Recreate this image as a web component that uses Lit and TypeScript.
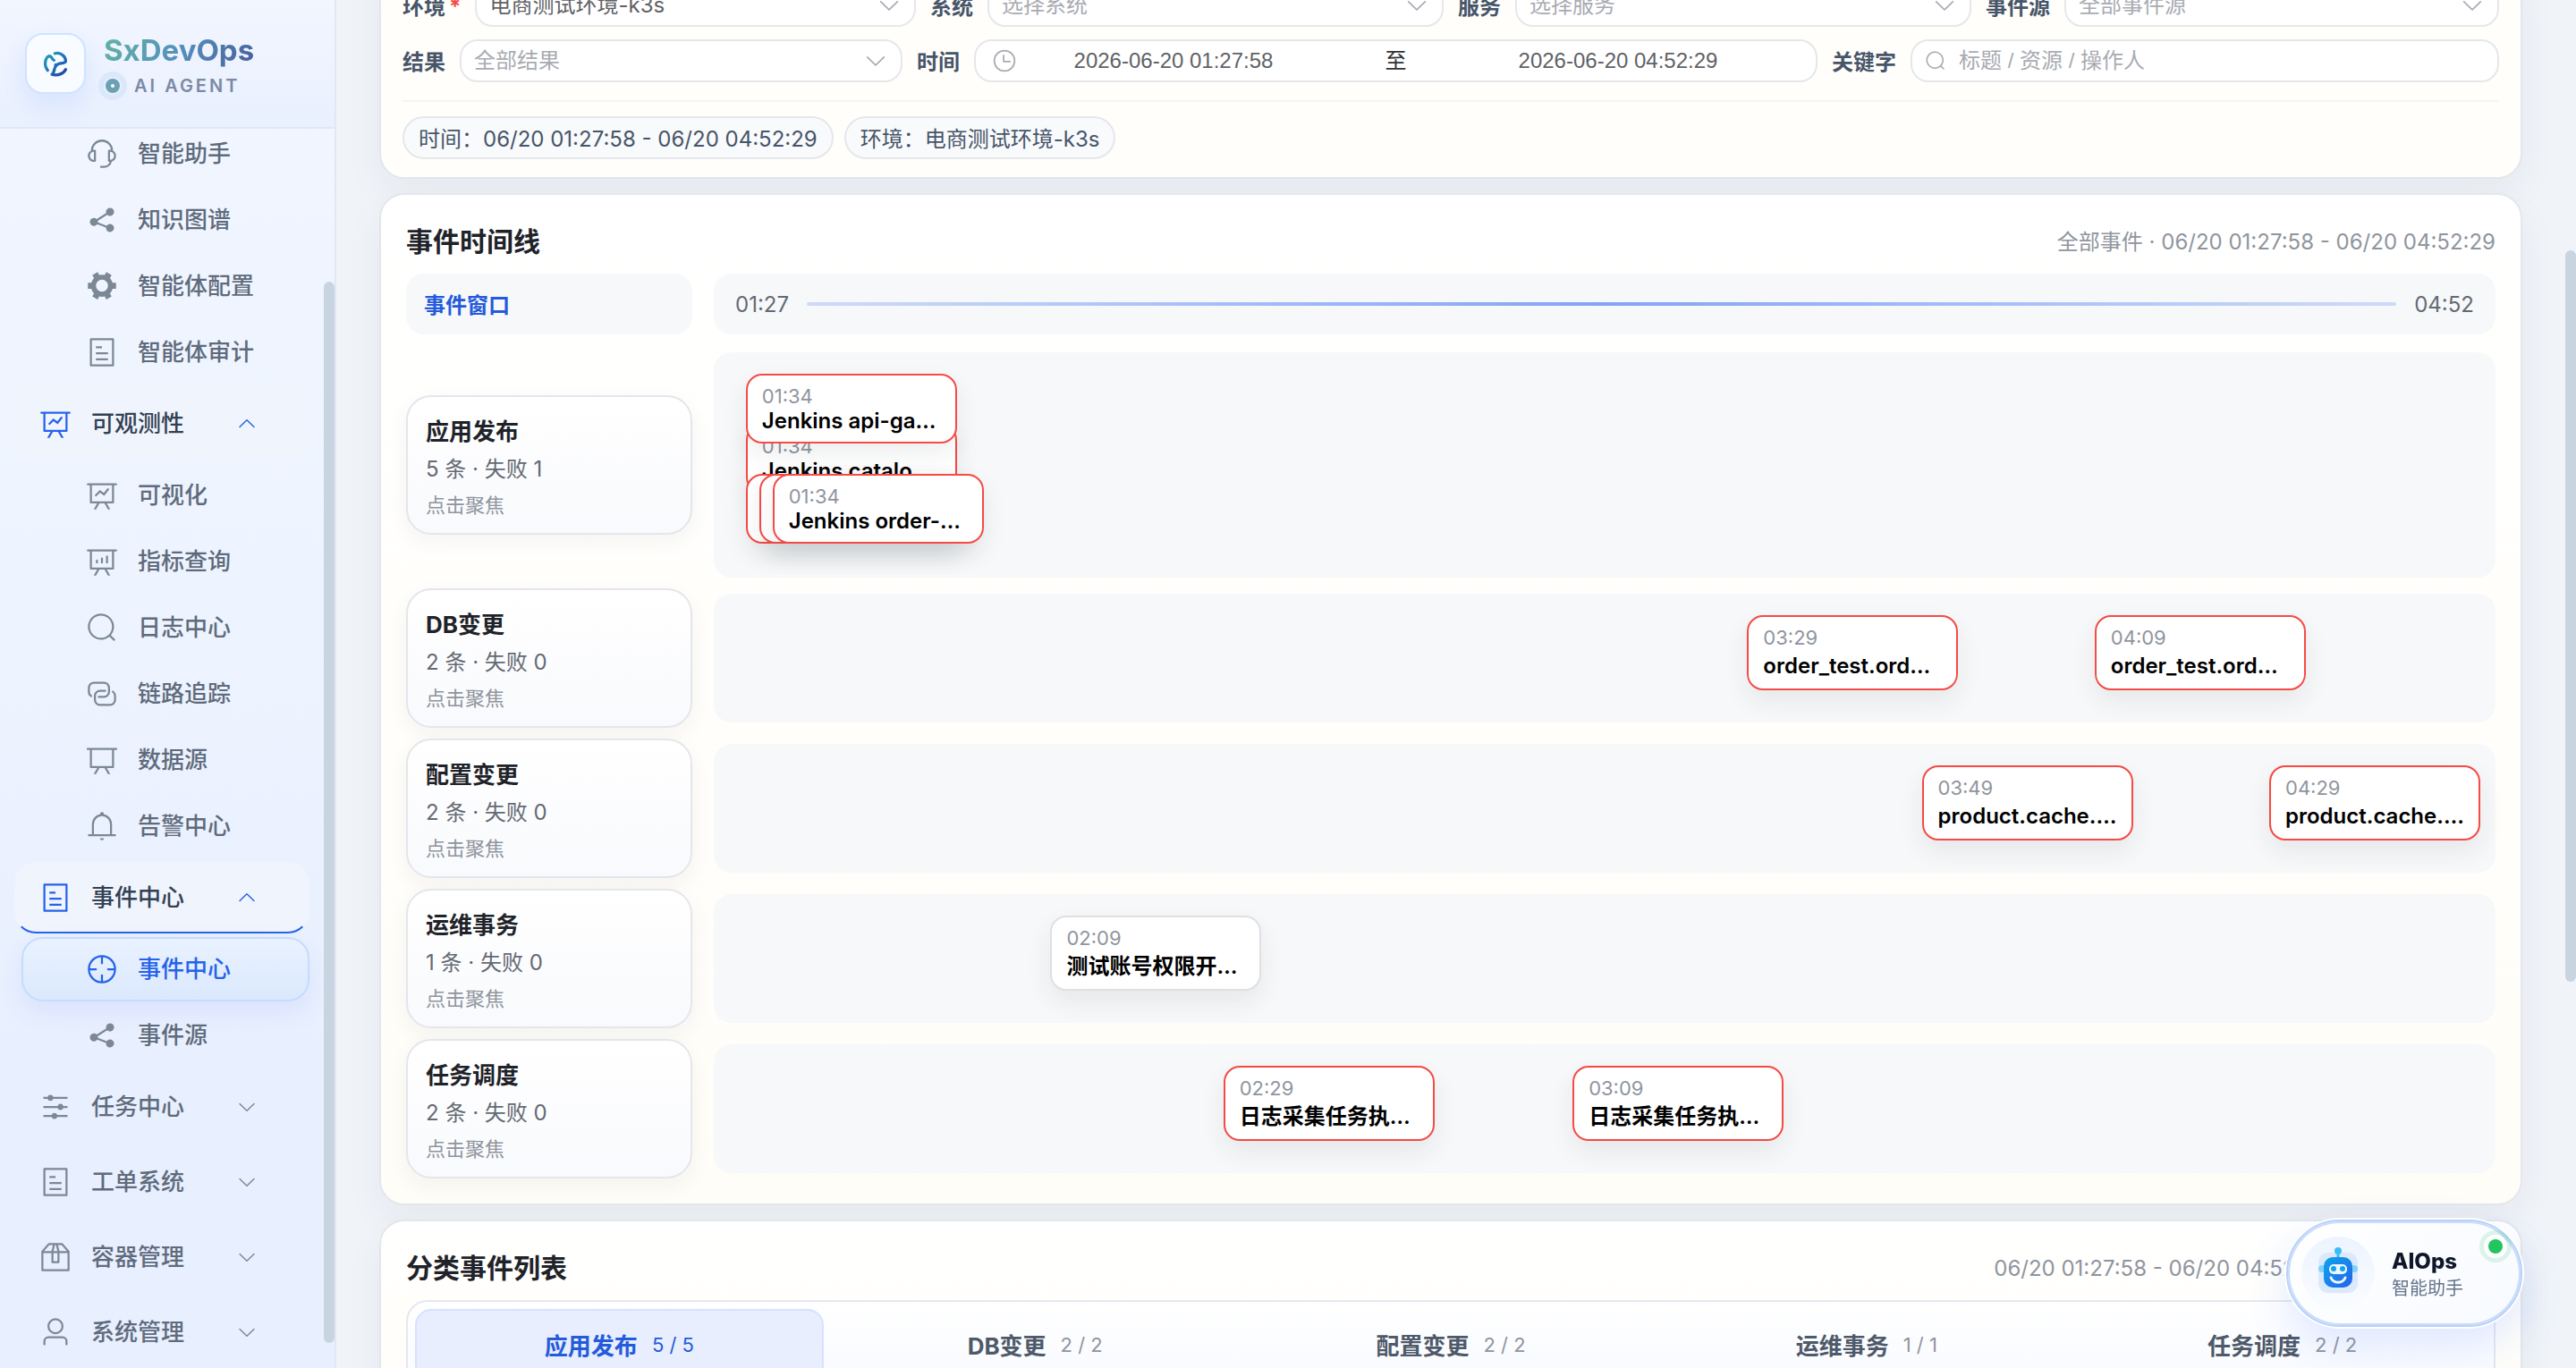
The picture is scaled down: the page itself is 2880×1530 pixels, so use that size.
import { LitElement, html, svg, css } from "lit";
import { customElement, state } from "lit/decorators.js";
import { classMap } from "lit/directives/class-map.js";
import { styleMap } from "lit/directives/style-map.js";

const ICONS: Record<string, string> = {
  service:
    "M864 409.6a192 192 0 0 1-37.888 349.44A256.064 256.064 0 0 1 576 960h-96a32 32 0 1 1 0-64h96a192.064 192.064 0 0 0 181.12-128H736a32 32 0 0 1-32-32V416a32 32 0 0 1 32-32h32c10.368 0 20.544.832 30.528 2.432a288 288 0 0 0-573.056 0A193 193 0 0 1 256 384h32a32 32 0 0 1 32 32v320a32 32 0 0 1-32 32h-32a192 192 0 0 1-96-358.4 352 352 0 0 1 704 0M256 448a128 128 0 1 0 0 256zm640 128a128 128 0 0 0-128-128v256a128 128 0 0 0 128-128",
  share:
    "m679.872 348.8-301.76 188.608a127.8 127.8 0 0 1 5.12 52.16l279.936 104.96a128 128 0 1 1-22.464 59.904l-279.872-104.96a128 128 0 1 1-16.64-166.272l301.696-188.608a128 128 0 1 1 33.92 54.272z",
  tools:
    "M764.416 254.72a351.7 351.7 0 0 1 86.336 149.184H960v192.064H850.752a351.7 351.7 0 0 1-86.336 149.312l54.72 94.72-166.272 96-54.592-94.72a352.64 352.64 0 0 1-172.48 0L371.136 936l-166.272-96 54.72-94.72a351.7 351.7 0 0 1-86.336-149.312H64v-192h109.248a351.7 351.7 0 0 1 86.336-149.312L204.864 160l166.208-96h.064l54.592 94.72a352.64 352.64 0 0 1 172.48 0L652.8 64h.064l166.272 96-54.72 94.72zM704 499.968a192 192 0 1 0-384 0 192 192 0 0 0 384 0",
  tickets:
    "M192 128v768h640V128zm-32-64h704a32 32 0 0 1 32 32v832a32 32 0 0 1-32 32H160a32 32 0 0 1-32-32V96a32 32 0 0 1 32-32m160 448h384v64H320zm0-192h192v64H320zm0 384h384v64H320z",
  line:
    "M359.168 768H160a32 32 0 0 1-32-32V192H64a32 32 0 0 1 0-64h896a32 32 0 1 1 0 64h-64v544a32 32 0 0 1-32 32H665.216l110.848 192h-73.856L591.36 768H433.024L322.176 960H248.32zM832 192H192v512h640zM342.656 534.656a32 32 0 1 1-45.312-45.312L444.992 341.76l125.44 94.08L679.04 300.032a32 32 0 1 1 49.92 39.936L581.632 524.224 451.008 426.24 342.656 534.592z",
  bars:
    "m665.216 768 110.848 192h-73.856L591.36 768H433.024L322.176 960H248.32l110.848-192H160a32 32 0 0 1-32-32V192H64a32 32 0 0 1 0-64h896a32 32 0 1 1 0 64h-64v544a32 32 0 0 1-32 32zM832 192H192v512h640zM352 448a32 32 0 0 1 32 32v64a32 32 0 0 1-64 0v-64a32 32 0 0 1 32-32m160-64a32 32 0 0 1 32 32v128a32 32 0 0 1-64 0V416a32 32 0 0 1 32-32m160-64a32 32 0 0 1 32 32v192a32 32 0 1 1-64 0V352a32 32 0 0 1 32-32",
  search:
    "m795.904 750.72 124.992 124.928a32 32 0 0 1-45.248 45.248L750.656 795.904a416 416 0 1 1 45.248-45.248zM480 832a352 352 0 1 0 0-704 352 352 0 0 0 0 704",
  link:
    "M640 384v64H448a128 128 0 0 0-128 128v128a128 128 0 0 0 128 128h320a128 128 0 0 0 128-128V576a128 128 0 0 0-64-110.848V394.88c74.56 26.368 128 97.472 128 181.056v128a192 192 0 0 1-192 192H448a192 192 0 0 1-192-192V576a192 192 0 0 1 192-192zM384 640v-64h192a128 128 0 0 0 128-128V320a128 128 0 0 0-128-128H256a128 128 0 0 0-128 128v128a128 128 0 0 0 64 110.848v70.272A192.06 192.06 0 0 1 64 448V320a192 192 0 0 1 192-192h320a192 192 0 0 1 192 192v128a192 192 0 0 1-192 192z",
  board:
    "M359.168 768H160a32 32 0 0 1-32-32V192H32v-64h960v64h-96v544a32 32 0 0 1-32 32H665.216l110.848 192h-73.856L591.36 768H433.024L322.176 960H248.32zM832 192H192v512h640z",
  bell:
    "M512 64a64 64 0 0 1 64 64v64H448v-64a64 64 0 0 1 64-64M256 768h512V448a256 256 0 1 0-512 0zm256-640a320 320 0 0 1 320 320v384H192V448a320 320 0 0 1 320-320M96 768h832q32 0 32 32t-32 32H96q-32 0-32-32t32-32m352 128h128a64 64 0 0 1-128 0",
  aim:
    "M512 896a384 384 0 1 0 0-768 384 384 0 0 0 0 768m0 64a448 448 0 1 1 0-896 448 448 0 0 1 0 896M512 96a32 32 0 0 1 32 32v192a32 32 0 0 1-64 0V128a32 32 0 0 1 32-32m0 576a32 32 0 0 1 32 32v192a32 32 0 1 1-64 0V704a32 32 0 0 1 32-32M96 512a32 32 0 0 1 32-32h192a32 32 0 0 1 0 64H128a32 32 0 0 1-32-32m576 0a32 32 0 0 1 32-32h192a32 32 0 1 1 0 64H704a32 32 0 0 1-32-32",
  operation:
    "M389.44 768a96.064 96.064 0 0 1 181.12 0H896v64H570.56a96.064 96.064 0 0 1-181.12 0H128v-64zm192-288a96.064 96.064 0 0 1 181.12 0H896v64H762.56a96.064 96.064 0 0 1-181.12 0H128v-64zm-320-288a96.064 96.064 0 0 1 181.12 0H896v64H442.56a96.064 96.064 0 0 1-181.12 0H128v-64z",
  box:
    "M317.056 128 128 344.064V896h768V344.064L706.944 128zm-14.528-64h418.944a32 32 0 0 1 24.064 10.88l206.528 236.096A32 32 0 0 1 960 332.032V928a32 32 0 0 1-32 32H96a32 32 0 0 1-32-32V332.032a32 32 0 0 1 7.936-21.12L278.4 75.008A32 32 0 0 1 302.528 64M64 320h896v64H64zM448 327.872V640h128V327.872L526.08 128h-28.16zM448 64h128l64 256v352a32 32 0 0 1-32 32H416a32 32 0 0 1-32-32V320z",
  user:
    "M512 512a192 192 0 1 0 0-384 192 192 0 0 0 0 384m0 64a256 256 0 1 1 0-512 256 256 0 0 1 0 512m320 320v-96a96 96 0 0 0-96-96H288a96 96 0 0 0-96 96v96a32 32 0 1 1-64 0v-96a160 160 0 0 1 160-160h448a160 160 0 0 1 160 160v96a32 32 0 1 1-64 0",
  down:
    "M831.872 340.864 512 652.672 192.128 340.864a30.59 30.59 0 0 0-42.752 0 29.12 29.12 0 0 0 0 41.6L489.664 714.24a32 32 0 0 0 44.672 0l340.288-331.712a29.12 29.12 0 0 0 0-41.728 30.59 30.59 0 0 0-42.752 0z",
  clock:
    "M512 896a384 384 0 1 0 0-768 384 384 0 0 0 0 768m0 64a448 448 0 1 1 0-896 448 448 0 0 1 0 896M480 256a32 32 0 0 1 32 32v256a32 32 0 0 1-64 0V288a32 32 0 0 1 32-32M480 512h256q32 0 32 32t-32 32H480q-32 0-32-32t32-32",
};

const icon = (name: string, cls = "icon") =>
  html`<svg class=${cls} viewBox="0 0 1024 1024" aria-hidden="true">${svg`<path fill="currentColor" d=${ICONS[name]}></path>`}</svg>`;

interface Child { label: string; icon: string; }
interface Group { label: string; icon: string; open?: boolean; current?: boolean; children: Child[]; }

const ASSISTANT: Child[] = [
  { label: "智能助手", icon: "service" },
  { label: "知识图谱", icon: "share" },
  { label: "智能体配置", icon: "tools" },
  { label: "智能体审计", icon: "tickets" },
];

const GROUPS: Group[] = [
  {
    label: "可观测性", icon: "line", open: true,
    children: [
      { label: "可视化", icon: "line" },
      { label: "指标查询", icon: "bars" },
      { label: "日志中心", icon: "search" },
      { label: "链路追踪", icon: "link" },
      { label: "数据源", icon: "board" },
      { label: "告警中心", icon: "bell" },
    ],
  },
  {
    label: "事件中心", icon: "tickets", open: true, current: true,
    children: [
      { label: "事件中心", icon: "aim" },
      { label: "事件源", icon: "share" },
    ],
  },
  { label: "任务中心", icon: "operation", children: [] },
  { label: "工单系统", icon: "tickets", children: [] },
  { label: "容器管理", icon: "box", children: [] },
  { label: "系统管理", icon: "user", children: [] },
];

interface Ev { time: string; title: string; at: number; level?: number; plain?: boolean; }
interface Lane { name: string; total: number; failed: number; events: Ev[]; }

const LANES: Lane[] = [
  {
    name: "应用发布", total: 5, failed: 1,
    events: [
      { time: "01:34", title: "Jenkins catalog-service", at: 1.8, level: 1 },
      { time: "01:34", title: "Jenkins api-gateway", at: 1.8, level: 0 },
      { time: "01:34", title: "Jenkins user-service", at: 1.8, level: 2 },
      { time: "01:34", title: "Jenkins cart-service", at: 2.55, level: 2 },
      { time: "01:34", title: "Jenkins order-service", at: 3.3, level: 2 },
    ],
  },
  {
    name: "DB变更", total: 2, failed: 0,
    events: [
      { time: "03:29", title: "order_test.orders", at: 58 },
      { time: "04:09", title: "order_test.orders", at: 77.5 },
    ],
  },
  {
    name: "配置变更", total: 2, failed: 0,
    events: [
      { time: "03:49", title: "product.cache.ttl_seconds", at: 67.8 },
      { time: "04:29", title: "product.cache.ttl_seconds", at: 87.3 },
    ],
  },
  {
    name: "运维事务", total: 1, failed: 0,
    events: [{ time: "02:09", title: "测试账号权限开通申请", at: 18.9, plain: true }],
  },
  {
    name: "任务调度", total: 2, failed: 0,
    events: [
      { time: "02:29", title: "日志采集任务执行完成", at: 28.6 },
      { time: "03:09", title: "日志采集任务执行完成", at: 48.2 },
    ],
  },
];

const RANGE = "06/20 01:27:58 - 06/20 04:52:29";

@customElement("app-root")
export class AppRoot extends LitElement {
  @state() private tab = "应用发布";

  static styles = css`
    :host {
      display: block;
      font-family: Inter, "Noto Sans CJK SC", sans-serif;
      font-size: 24px;
      line-height: 28px;
      color: #1f2329;
    }
    *, *::before, *::after { box-sizing: border-box; }
    button, input, select { font: inherit; color: inherit; margin: 0; padding: 0; border: 0; background: none; outline: 0; }
    button { cursor: pointer; text-align: left; }
    a { color: inherit; text-decoration: none; }
    h2 { margin: 0; font-size: 30px; line-height: 36px; font-weight: 700; }
    svg { display: block; flex: none; }

    .app { display: grid; grid-template-columns: 376px minmax(0, 1fr) 12px; height: 100vh; overflow: hidden; background: #f0f4f9; }

    /* sidebar */
    .side { display: flex; flex-direction: column; min-height: 0; border-right: 2px solid #e2e8f3; background: linear-gradient(180deg, #f1f6ff, #eef4ff 40%, #e8effe 80%); }
    .brand { flex: none; display: flex; align-items: center; gap: 20px; height: 144px; padding: 0 28px; border-bottom: 2px solid #e2e8f3; background: linear-gradient(180deg, #f2f6ff, #e9f0fe); }
    .mark { display: grid; place-items: center; width: 68px; height: 68px; border: 2px solid #d0e3ff; border-radius: 20px; background: #f8fbff; box-shadow: 0 12px 28px rgba(59, 130, 246, 0.12); }
    .mark svg { width: 26px; height: 29px; }
    .brand-text { display: flex; flex-direction: column; gap: 8px; padding-top: 2px; }
    .brand-name { font-size: 33px; line-height: 40px; font-weight: 700; background: linear-gradient(120deg, #62b5a3, #5590ba 50%, #4a5d9c); -webkit-background-clip: text; background-clip: text; color: transparent; }
    .brand-sub { display: flex; align-items: center; gap: 16px; padding-left: 2px; font-size: 20px; line-height: 24px; font-weight: 600; letter-spacing: 3px; color: #7b8aa5; }
    .pulse { width: 16px; height: 16px; border-radius: 50%; border: 6px solid #6ca0b4; background: #fff; box-shadow: 0 0 0 2px #e8f0fa, 0 0 0 8px #dbe8fb; }

    .nav-wrap { flex: 1; min-height: 0; display: grid; grid-template-columns: minmax(0, 1fr) 12px; overflow: hidden; }
    .nav { display: flex; flex-direction: column; gap: 4px; margin-top: -8px; padding: 0 16px; }
    .subs { display: flex; flex-direction: column; gap: 2px; padding-left: 8px; }
    .group { display: flex; flex-direction: column; gap: 4px; }
    .item { display: flex; align-items: center; gap: 22px; font-size: 26px; line-height: 32px; font-weight: 500; white-space: nowrap; color: #5f6b7c; border-radius: 24px; border: 2px solid transparent; }
    .item .icon { width: 36px; height: 36px; color: #7c8896; }
    .top { height: 80px; padding: 0 56px 0 26px; width: 330px; }
    .top .grow { flex: 1; }
    .top .caret { width: 24px; height: 24px; color: #7c8896; }
    .top.open { color: #334155; background: #f0f4fc; }
    .top.open .icon, .top.open .caret { color: #2563eb; }
    .top.open .caret { transform: rotate(180deg); }
    .top.current { border-bottom-color: #2563eb; }
    .sub { height: 72px; padding: 0 70px; width: 322px; }
    .sub.active { color: #2563eb; border-color: #c5dcfd; background: linear-gradient(180deg, #e9f2ff, #dbe8fd); box-shadow: 0 12px 28px rgba(79, 110, 246, 0.1); }
    .sub.active .icon { color: #2563eb; }
    .side-thumb { margin: 171px 0 28px; border-radius: 6px; background: #c9d4e1; }

    /* content */
    .main { min-width: 0; display: flex; flex-direction: column; gap: 16px; padding: 0 48px; overflow: hidden; }
    .page-thumb { height: 818px; margin-top: 280px; border-radius: 6px; background: #c9d4e1; }
    .card { flex: none; border: 2px solid #e3e6eb; border-radius: 28px; background: linear-gradient(180deg, #ffffff, #fffefa 60%, #fffdf8); box-shadow: 0 16px 44px rgba(31, 45, 61, 0.05); }
    .filters { margin-top: -44px; padding: 24px 24px 20px; background: #fffefb; }
    .panel { padding: 34px 28px 28px; }

    .row { display: grid; column-gap: 16px; margin-bottom: 14px; }
    .row.four { grid-template-columns: repeat(4, minmax(0, 1fr)); }
    .row.three { grid-template-columns: 559fr 1007fr 746fr; margin-bottom: 20px; }
    .field { display: flex; align-items: center; gap: 16px; min-width: 0; }
    .field > label { flex: none; font-weight: 700; color: #475569; padding-top: 4px; }
    .req { color: #f54a45; padding-left: 4px; }
    .control { flex: 1; min-width: 0; display: flex; align-items: center; height: 48px; padding: 0 14px; border: 2px solid #e5e7eb; border-radius: 20px; background: #fff; color: #a8abb2; }
    .control.pick { display: grid; grid-template-columns: minmax(0, 1fr); padding: 0; }
    .control.pick > * { grid-area: 1 / 1; }
    .control select { appearance: none; width: 100%; height: 44px; padding: 0 48px 0 14px; border-radius: 18px; color: #a8abb2; }
    .control select.set { color: #606266; }
    .control .chev { width: 28px; height: 28px; justify-self: end; margin-right: 14px; pointer-events: none; }
    .control .lead { width: 28px; height: 28px; }
    .control .find { width: 24px; height: 24px; margin-right: 14px; }
    .control input { flex: 1; min-width: 0; height: 44px; color: #606266; font-family: "Liberation Sans", "Noto Sans CJK SC", sans-serif; }
    .control input::placeholder { color: #a8abb2; opacity: 1; }
    .control.range { padding: 0 46px 0 18px; }
    .range input { flex: 0 0 40%; text-align: center; }
    .range .to { flex: 1; text-align: center; color: #303133; }
    .chips { display: flex; gap: 12px; padding-top: 16px; border-top: 2px solid #f1f5f9; }
    .chip { display: flex; align-items: center; height: 48px; padding: 4px 16px 0; border: 2px solid #e5e7eb; border-radius: 24px; background: #f8fafc; color: #475569; }

    .head { display: flex; align-items: center; justify-content: space-between; height: 36px; margin-bottom: 18px; }
    .meta { padding-top: 2px; color: #8f959e; }
    .meta.clear { padding-right: 187px; }
    .line { display: grid; grid-template-columns: 320px minmax(0, 1fr); column-gap: 24px; align-items: center; }
    .axis { margin-bottom: 20px; }
    .window, .scale { height: 68px; border-radius: 20px; background: #f7f8fa; display: flex; align-items: center; }
    .window { padding: 4px 20px 0; font-weight: 600; color: #245bdb; }
    .scale { gap: 20px; padding: 0 24px; color: #646a73; }
    .tick { padding-top: 2px; }
    .track { flex: 1; height: 4px; border-radius: 2px; background: linear-gradient(90deg, #cddafb, #84a3f5 50%, #cddafb); }
    .lanes { display: flex; flex-direction: column; gap: 12px; }
    .lane-card { height: 156px; display: flex; flex-direction: column; justify-content: center; padding: 5px 20px 0; border: 2px solid #e5e6eb; border-radius: 28px; background: linear-gradient(180deg, #fff, #f9fafd); box-shadow: 0 8px 24px rgba(31, 35, 41, 0.05); }
    .lane-name { font-size: 26px; line-height: 44px; font-weight: 700; }
    .lane-sum { line-height: 40px; color: #646a73; }
    .lane-hint { font-size: 22px; line-height: 40px; color: #8f959e; }
    .lane { position: relative; height: 144px; border-radius: 20px; background: #f7f8fa; }
    .lane.tall { height: 252px; }
    .event { position: absolute; width: 236px; display: flex; flex-direction: column; gap: 4px; padding: 9px 16px 11px; border: 2px solid #f54a45; border-radius: 18px; background: #fff; box-shadow: 0 12px 28px rgba(31, 35, 41, 0.08); }
    .tall .event { gap: 0; padding-bottom: 9px; }
    .event.plain { border-color: #dee0e3; }
    .event-time { font-size: 22px; line-height: 28px; color: #8f959e; }
    .event-title { line-height: 28px; font-weight: 600; color: #000; overflow: hidden; text-overflow: ellipsis; white-space: nowrap; }

    .tabs { display: grid; grid-template-columns: repeat(5, minmax(0, 1fr)); gap: 8px; padding: 8px; border: 2px solid #e5e8ef; border-radius: 24px; background: linear-gradient(180deg, #fff, #f8faff); }
    .tab { display: flex; align-items: center; justify-content: center; gap: 16px; height: 80px; border: 2px solid transparent; border-radius: 18px; font-size: 22px; color: #8f959e; }
    .tab b { font-size: 26px; font-weight: 700; color: #4e5969; padding-top: 4px; }
    .tab.on { background: #e8eefe; border-color: #d6e2ff; color: #245bdb; }
    .tab.on b { color: #245bdb; }

    /* floating assistant */
    .bot { position: fixed; right: 60px; bottom: 46px; width: 264px; height: 120px; display: flex; align-items: center; gap: 18px; padding-left: 14px; border: 2px solid #b9d1f9; border-radius: 60px; background: linear-gradient(135deg, #ffffff, #f7faff); box-shadow: inset 0 0 0 2px #c9dcfb, 0 0 0 2px #fff, 0 20px 48px rgba(59, 110, 246, 0.16); }
    .bot-face { width: 84px; height: 84px; }
    .bot-text { display: flex; flex-direction: column; gap: 2px; padding-top: 4px; }
    .bot-name { line-height: 28px; font-weight: 800; color: #0f172a; }
    .bot-role { font-size: 20px; line-height: 28px; color: #64748b; }
    .online { position: absolute; top: 20px; right: 20px; width: 16px; height: 16px; border-radius: 50%; background: #22c55e; box-shadow: 0 0 0 5px #fff, 0 0 0 10px rgba(34, 197, 94, 0.14); }
  `;

  private renderChild(c: Child, active = false) {
    return html`<a href="#" class=${classMap({ item: true, sub: true, active })}>${icon(c.icon)}<span>${c.label}</span></a>`;
  }

  private renderGroup(g: Group) {
    return html`<div class="group">
      <button class=${classMap({ item: true, top: true, open: !!g.open, current: !!g.current })} aria-expanded=${g.open ? "true" : "false"}>
        ${icon(g.icon)}<span class="grow">${g.label}</span>${icon("down", "caret")}
      </button>
      ${g.children.length ? html`<div class="subs">${g.children.map((c, i) => this.renderChild(c, !!g.current && i === 0))}</div>` : null}
    </div>`;
  }

  private renderSide() {
    return html`<aside class="side">
      <div class="brand">
        <div class="mark">
          <svg viewBox="0 0 80 88" aria-hidden="true">
            <defs>
              <linearGradient id="m1" x1="0" y1="0" x2="80" y2="88" gradientUnits="userSpaceOnUse">
                <stop offset="0" stop-color="#22b5a0"></stop><stop offset=".5" stop-color="#1f6fc4"></stop><stop offset="1" stop-color="#213f94"></stop>
              </linearGradient>
            </defs>
            <g fill="none" stroke="url(#m1)" stroke-width="10" stroke-linecap="round" stroke-linejoin="round">
              <path d="M13 66C4 56 2 38 9 25C13 17 21 14 26 21C29 26 32 31 35 31"></path>
              <path d="M38 8C55 3 74 16 75 32C76 42 66 40 56 42C44 44 38 54 36 64L32 78"></path>
              <path d="M28 80C48 86 68 77 75 63"></path>
              <circle cx="41" cy="48" r="4" stroke-width="4"></circle>
            </g>
          </svg>
        </div>
        <div class="brand-text">
          <div class="brand-name">SxDevOps</div>
          <div class="brand-sub"><span class="pulse"></span>AI AGENT</div>
        </div>
      </div>
      <div class="nav-wrap">
        <nav class="nav">
          <div class="subs">${ASSISTANT.map((c) => this.renderChild(c))}</div>
          ${GROUPS.map((g) => this.renderGroup(g))}
        </nav>
        <div class="side-thumb"></div>
      </div>
    </aside>`;
  }

  private renderSelect(id: string, label: string, value: string, required = false) {
    return html`<div class="field">
      <label for=${id}>${label}${required ? html`<span class="req">*</span>` : null}</label>
      <div class="control pick">
        <select id=${id} class=${classMap({ set: required })}><option>${value}</option></select>
        ${icon("down", "chev")}
      </div>
    </div>`;
  }

  private renderFilters() {
    return html`<section class="card filters">
      <div class="row four">
        ${this.renderSelect("env", "环境", "电商测试环境-k3s", true)}
        ${this.renderSelect("system", "系统", "选择系统")}
        ${this.renderSelect("service", "服务", "选择服务")}
        ${this.renderSelect("source", "事件源", "全部事件源")}
      </div>
      <div class="row three">
        ${this.renderSelect("result", "结果", "全部结果")}
        <div class="field">
          <label for="from">时间</label>
          <div class="control range">
            ${icon("clock", "lead")}
            <input id="from" value="2026-06-20 01:27:58" />
            <span class="to">至</span>
            <input aria-label="结束时间" value="2026-06-20 04:52:29" />
          </div>
        </div>
        <div class="field">
          <label for="keyword">关键字</label>
          <div class="control">
            ${icon("search", "find")}
            <input id="keyword" placeholder="标题 / 资源 / 操作人" />
          </div>
        </div>
      </div>
      <div class="chips">
        <span class="chip">时间：${RANGE}</span>
        <span class="chip">环境：电商测试环境-k3s</span>
      </div>
    </section>`;
  }

  private renderLane(lane: Lane) {
    const tall = lane.events.some((e) => (e.level ?? 0) > 0);
    return html`<div class="line">
      <button class="lane-card">
        <span class="lane-name">${lane.name}</span>
        <span class="lane-sum">${lane.total} 条 · 失败 ${lane.failed}</span>
        <span class="lane-hint">点击聚焦</span>
      </button>
      <div class=${classMap({ lane: true, tall })}>
        ${lane.events.map(
          (e) => html`<button
            class=${classMap({ event: true, plain: !!e.plain })}
            style=${styleMap({ left: `${e.at}%`, top: `${24 + (e.level ?? 0) * 56}px` })}
          >
            <span class="event-time">${e.time}</span><span class="event-title">${e.title}</span>
          </button>`
        )}
      </div>
    </div>`;
  }

  render() {
    return html`<div class="app">
      ${this.renderSide()}
      <main class="main">
        ${this.renderFilters()}
        <section class="card panel">
          <div class="head"><h2>事件时间线</h2><span class="meta">全部事件 · ${RANGE}</span></div>
          <div class="line axis">
            <div class="window">事件窗口</div>
            <div class="scale"><span class="tick">01:27</span><span class="track"></span><span class="tick">04:52</span></div>
          </div>
          <div class="lanes">${LANES.map((l) => this.renderLane(l))}</div>
        </section>
        <section class="card panel">
          <div class="head"><h2>分类事件列表</h2><span class="meta clear">${RANGE}</span></div>
          <div class="tabs" role="tablist">
            ${LANES.map(
              (l) => html`<button
                role="tab"
                aria-selected=${this.tab === l.name ? "true" : "false"}
                class=${classMap({ tab: true, on: this.tab === l.name })}
                @click=${() => (this.tab = l.name)}
              ><b>${l.name}</b><span>${l.total} / ${l.total}</span></button>`
            )}
          </div>
        </section>
      </main>
      <div class="page-thumb"></div>
      <button class="bot">
        <svg class="bot-face" viewBox="0 0 84 84" aria-hidden="true">
          <defs>
            <linearGradient id="b1" x1="0" y1="0" x2="1" y2="1"><stop offset="0" stop-color="#0ea5e9"></stop><stop offset="1" stop-color="#2563eb"></stop></linearGradient>
            <linearGradient id="b2" x1="0" y1="0" x2="0" y2="1"><stop offset="0" stop-color="#edf4ff"></stop><stop offset="1" stop-color="#fafcff"></stop></linearGradient>
          </defs>
          <circle cx="42" cy="42" r="41" fill="url(#b2)"></circle>
          <rect x="20" y="19" width="44" height="45" rx="11" fill="#dbe9fd"></rect>
          <circle cx="24" cy="37" r="4" fill="#7dd3fc"></circle>
          <circle cx="60" cy="37" r="4" fill="#7dd3fc"></circle>
          <path d="M42 18v9" stroke="#38bdf8" stroke-width="3"></path>
          <circle cx="42" cy="17" r="4" fill="#38bdf8"></circle>
          <rect x="26" y="24" width="32" height="34" rx="10" fill="url(#b1)"></rect>
          <rect x="32" y="32" width="20" height="11" rx="5" fill="#eff6ff"></rect>
          <circle cx="37" cy="37" r="3" fill="#0ea5e9"></circle>
          <circle cx="47" cy="37" r="3" fill="#0ea5e9"></circle>
          <path d="M34 47c3 7 13 7 16 0" fill="none" stroke="#eff6ff" stroke-width="3" stroke-linecap="round"></path>
        </svg>
        <span class="bot-text"><span class="bot-name">AIOps</span><span class="bot-role">智能助手</span></span>
        <span class="online"></span>
      </button>
    </div>`;
  }
}
